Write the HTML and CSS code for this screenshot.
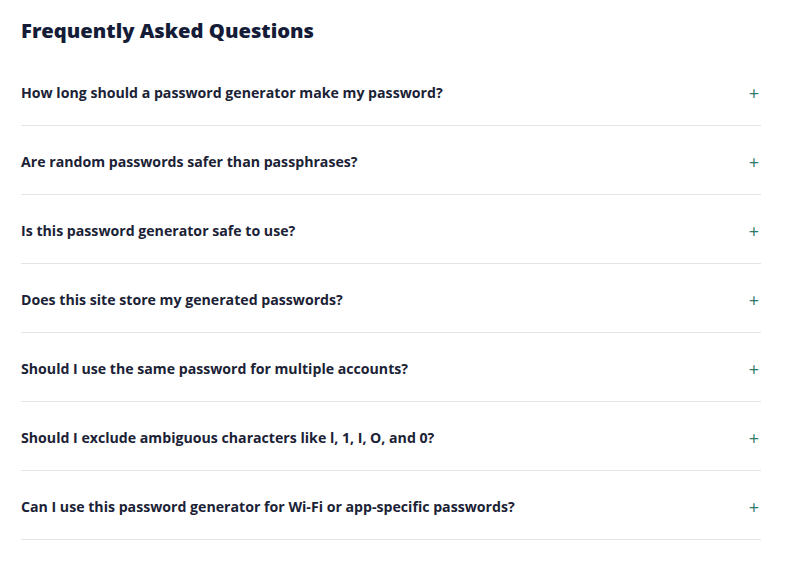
FILE: index.html
```html
<!DOCTYPE html>
<html lang="en">
<head>
    <meta charset="UTF-8">
    <meta name="viewport" content="width=device-width, initial-scale=1.0">
    <title>FAQ</title>
    <link rel="stylesheet" href="styles.css">
</head>
<body>
    <section class="faq">
        <h2 class="faq-title">Frequently Asked Questions</h2>
        <div class="faq-list">
            <div class="faq-item"><span class="faq-q">How long should a password generator make my password?</span><span class="faq-icon">+</span></div>
            <div class="faq-item"><span class="faq-q">Are random passwords safer than passphrases?</span><span class="faq-icon">+</span></div>
            <div class="faq-item"><span class="faq-q">Is this password generator safe to use?</span><span class="faq-icon">+</span></div>
            <div class="faq-item"><span class="faq-q">Does this site store my generated passwords?</span><span class="faq-icon">+</span></div>
            <div class="faq-item"><span class="faq-q">Should I use the same password for multiple accounts?</span><span class="faq-icon">+</span></div>
            <div class="faq-item"><span class="faq-q">Should I exclude ambiguous characters like l, 1, I, O, and 0?</span><span class="faq-icon">+</span></div>
            <div class="faq-item"><span class="faq-q">Can I use this password generator for Wi-Fi or app-specific passwords?</span><span class="faq-icon">+</span></div>
        </div>
    </section>
</body>
</html>
```

FILE: styles.css
```css
body {
    margin: 0;
    padding: 0;
    background-color: #ffffff;
    font-family: "Open Sans", "Noto Sans", Arial, sans-serif;
    color: #1b2236;
}
.faq {
    width: 740px;
    padding: 15px 0 0 21px;
}
.faq-title {
    margin: 0 0 12px 0;
    font-size: 20.2px;
    font-weight: 800;
    line-height: 30px;
    color: #141c38;
}
.faq-item {
    display: flex;
    justify-content: space-between;
    align-items: center;
    height: 68px;
    border-bottom: 1px solid #e4e4e4;
}
.faq-q {
    font-size: 14.15px;
    font-weight: 700;
    line-height: 20px;
    padding-top: 3px;
}
.faq-icon {
    width: 14px;
    text-align: center;
    font-size: 18px;
    line-height: 20px;
    color: #2c7a68;
    padding-top: 3px;
}
```
